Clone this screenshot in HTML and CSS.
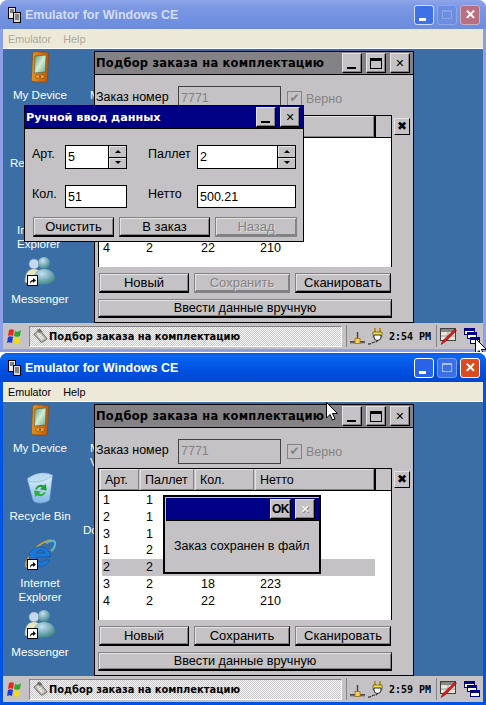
FILE: index.html
```html
<!DOCTYPE html>
<html lang="en">
<head>
    <meta charset="UTF-8">
    <meta name="viewport" content="width=device-width, initial-scale=1.0">
    <title>Emulator for Windows CE</title>
    <link rel="stylesheet" href="styles.css">
</head>
<body>

    <svg class="defs" width="0" height="0">
        <defs>
            <linearGradient id="pda" x1="0" y1="0" x2="1" y2="0">
                <stop offset="0" stop-color="#e8901c"/>
                <stop offset="1" stop-color="#b85c10"/>
            </linearGradient>
            <linearGradient id="screen" x1="0" y1="0" x2="1" y2="1">
                <stop offset="0" stop-color="#5f9c72"/>
                <stop offset="0.5" stop-color="#d2ecd8"/>
                <stop offset="1" stop-color="#6da783"/>
            </linearGradient>
            <linearGradient id="bin" x1="0" y1="0" x2="0" y2="1">
                <stop offset="0" stop-color="#e6f4fc"/>
                <stop offset="1" stop-color="#7fb7e4"/>
            </linearGradient>
            <radialGradient id="ball" cx="0.4" cy="0.3" r="0.8">
                <stop offset="0" stop-color="#c6e2f2"/>
                <stop offset="1" stop-color="#2f7a7c"/>
            </radialGradient>
        </defs>
        <symbol id="i-device" viewBox="0 0 18 32">
            <rect x="1" y="1" width="16" height="30" rx="2" transform="rotate(3 9 16)" fill="url(#pda)" stroke="#8a4a10" stroke-width="0.7"/>
            <path d="M4 5 L15 4 L14.5 21 L3.5 22 Z" fill="url(#screen)" stroke="#3c5a48" stroke-width="0.6"/>
            <path d="M5 24h8v3H5z" fill="#f0a83c" stroke="#8a4a10" stroke-width="0.5"/>
            <circle cx="9" cy="25.5" r="1" fill="#7a4010"/>
        </symbol>
        <symbol id="i-bin" viewBox="0 0 28 33">
            <path d="M1 8 C8 2 20 1 27 3 L24 29 C20 33 10 33 7 30 Z" fill="url(#bin)" stroke="#5c92c4" stroke-width="0.6"/>
            <path d="M2 9 C8 12 18 10 27 4 L24 2 C18 0 8 1 1 7 Z" fill="#bcdcf2" stroke="#7aa8d4" stroke-width="0.5"/>
            <path d="M9 18 a6 6 0 0 1 9 -4 l2 -2 l1 7 l-7 -1 l2 -2 a3.5 3.5 0 0 0 -5 2 Z" fill="#1fa02e"/>
            <path d="M20 21 a6 6 0 0 1 -9 3 l-2 2 l-1 -7 l7 1 l-2 2 a3.5 3.5 0 0 0 5 -1 Z" fill="#26b436"/>
        </symbol>
        <symbol id="i-ie" viewBox="0 0 32 30">
            <path d="M6 25 C1 29 0 26 5 17 C11 6 24 -2 30 1 C32 3 31 7 28 11" fill="none" stroke="#e0a21c" stroke-width="1.6"/>
            <path d="M5 15 a11 11 0 0 1 21 -1 l0 3 H12 a5 5 0 0 0 9 3 h5 a11 11 0 0 1 -21 -5 Z M12 13 h9 a5 5 0 0 0 -9 0 Z" fill="#1b78d8" fill-rule="evenodd" stroke="#0c4ea8" stroke-width="0.6"/>
            <path d="M22 3 C26 1 30 0 31 2 C32 5 29 9 27 11" fill="none" stroke="#4cb8ee" stroke-width="2"/>
        </symbol>
        <symbol id="i-messenger" viewBox="0 0 32 30">
            <circle cx="10" cy="8" r="5" fill="#c6d8ec" stroke="#6a94a8" stroke-width="0.5"/>
            <path d="M1 26 C1 16 5 13 10 13 C15 13 18 17 18 26 C12 29 6 29 1 26 Z" fill="#e8e8c0" stroke="#a8ac78" stroke-width="0.5"/>
            <circle cx="20" cy="7" r="6" fill="url(#ball)"/>
            <path d="M9 26 C9 16 14 13 20 13 C27 13 31 17 31 24 C26 30 14 30 9 26 Z" fill="url(#ball)"/>
        </symbol>
        <symbol id="i-link" viewBox="0 0 11 11">
            <rect x="0.5" y="0.5" width="10" height="10" fill="#fff" stroke="#000"/>
            <path d="M3 9 C3 6 4 5 6 5 V3 L9 5.5 L6 8 V6.5 C5 6.5 4 7 3 9 Z" fill="#000"/>
        </symbol>
        <symbol id="i-flag" viewBox="0 0 16 17">
            <path d="M3 2 C5 1 6 1 8 2 L7 8 C5 7 4 7 2 8 Z" fill="#e8281c"/>
            <path d="M9 3 C11 4 13 4 15 2 L14 8 C12 9 10 9 8 8 Z" fill="#2ca82c"/>
            <path d="M2 9 C4 8 5 8 7 9 L6 15 C4 14 3 14 1 15 Z" fill="#1c3cd8"/>
            <path d="M8 9 C10 10 12 10 14 9 L13 15 C11 16 9 16 7 15 Z" fill="#f4d81c"/>
        </symbol>
        <symbol id="i-task" viewBox="0 0 16 16">
            <path d="M1 6 L7 1 L15 11 L9 15 Z" fill="#c8c4b4" stroke="#505050" stroke-width="0.9"/>
            <path d="M3.5 6 L7 3.2 L12.8 10.8 L9 13 Z" fill="#f0f0e8" stroke="#808080" stroke-width="0.5"/>
            <path d="M4 1.5 L7 0 L10 3 L7 5 Z" fill="#707070"/>
            <path d="M6 7l3 -2M7.5 9l3 -2M9 11l2 -1.5" stroke="#808080" stroke-width="0.6"/>
        </symbol>
        <symbol id="i-net" viewBox="0 0 16 12">
            <path d="M0 10h15" stroke="#000" stroke-width="1.2"/>
            <path d="M0 11h15" stroke="#808080" stroke-width="1"/>
            <path d="M7.5 0v7" stroke="#404040" stroke-width="1.4"/>
            <rect x="5" y="6.5" width="5" height="5" fill="#f4d050" stroke="#a07010" stroke-width="0.8"/>
        </symbol>
        <symbol id="i-plug" viewBox="0 0 17 17">
            <path d="M7 0v4M12 0v4" stroke="#c09010" stroke-width="2"/>
            <path d="M5 4h9v3a4.5 4.5 0 0 1 -9 0Z" fill="#f0e040" stroke="#404000" stroke-width="0.6"/>
            <path d="M6 7h7v2a3.5 3.5 0 0 1 -7 0Z" fill="#fff" stroke="#000" stroke-width="0.8"/>
            <path d="M9.5 12 C9.5 15 7 13 4 15 C3 16 2 16 0 16" fill="none" stroke="#000" stroke-width="1" stroke-dasharray="3 1"/>
        </symbol>
        <symbol id="i-pen" viewBox="0 0 17 17">
            <rect x="0.5" y="0.5" width="15" height="12" fill="#e8e4d8" stroke="#404040"/>
            <path d="M1 1h14v3H1z" fill="#8a8680"/>
            <path d="M1 8h14M8 4v8" stroke="#808080" stroke-width="0.7"/>
            <path d="M15 1 L16.5 2.5 L5 14 L1 16.5 L3 12.5 Z" fill="#e01818" stroke="#700000" stroke-width="0.5"/>
        </symbol>
        <symbol id="i-windows" viewBox="0 0 16 16">
            <rect x="0.5" y="0.5" width="10" height="6" fill="#fff" stroke="#000080"/>
            <rect x="1" y="1" width="9" height="2" fill="#000080"/>
            <rect x="3.5" y="4.5" width="9" height="6" fill="#fff" stroke="#000080"/>
            <rect x="4" y="5" width="8" height="2" fill="#000080"/>
            <rect x="6.5" y="9.5" width="9" height="6" fill="#fff" stroke="#000080"/>
            <rect x="7" y="10" width="8" height="2" fill="#000080"/>
        </symbol>
        <symbol id="i-emu" viewBox="0 0 13 16">
            <rect x="0.5" y="0.5" width="7" height="11" fill="#e8e8e8" stroke="#000"/>
            <rect x="2" y="2" width="4" height="4" fill="#808080"/>
            <rect x="5.5" y="5.5" width="7" height="10" fill="#d8d8d8" stroke="#000"/>
            <path d="M7 8h4M7 10h4M7 12h4" stroke="#000" stroke-width="0.8"/>
        </symbol>
        <symbol id="i-cursor" viewBox="0 0 12 19">
            <path d="M0.5 0.5 V16 L4 12.5 L6.5 18 L9 17 L6.5 11.5 H11.5 Z" fill="#fff" stroke="#000" stroke-width="1"/>
        </symbol>
    </svg>

    <!-- first capture: emulator not focused, manual entry dialog open -->
    <div class="emu emu-inactive">
        <div class="emu-title">
            <svg class="emu-logo"><use href="#i-emu"/></svg>
            <span class="emu-name">Emulator for Windows CE</span>
            <div class="xp-buttons">
                <span class="xp-btn xp-min"><i></i></span>
                <span class="xp-btn xp-max off"><i></i></span>
                <span class="xp-btn xp-close">&#10005;</span>
            </div>
        </div>
        <div class="emu-menu"><span>Emulator</span><span>Help</span></div>

        <div class="desktop">
            <div class="desk-item at-device"><svg class="ic-device"><use href="#i-device"/></svg><span>My Device</span></div>
            <div class="desk-far at-re">Re</div>
            <div class="desk-far at-in">In</div>
            <div class="desk-far at-expl">Explorer</div>
            <div class="desk-item at-msn"><svg class="ic-big"><use href="#i-messenger"/></svg><svg class="ic-link"><use href="#i-link"/></svg><span>Messenger</span></div>
            <div class="desk-far at-word">M</div>

            <div class="app">
                <div class="app-title">
                    <span>Подбор заказа на комплектацию</span>
                    <div class="ce-buttons">
                        <span class="ce-btn"><i class="g-min"></i></span>
                        <span class="ce-btn"><i class="g-max"></i></span>
                        <span class="ce-btn g-x">&#10005;</span>
                    </div>
                </div>
                <div class="order-row">
                    <label class="order-label">Заказ номер</label>
                    <div class="field field-off order-no">7771</div>
                    <span class="check">&#10004;</span>
                    <span class="muted">Верно</span>
                </div>
                <div class="grid-row">
                    <div class="grid">
                        <div class="grid-head">
                            <span class="th w-art"></span>
                            <span class="th w-pal"></span>
                            <span class="th w-kol"></span>
                            <span class="th w-net"></span>
                            <span class="th-rest"></span>
                        </div>
                        <div class="grid-body">
                            <div class="tr"></div>
                            <div class="tr"></div>
                            <div class="tr"></div>
                            <div class="tr"></div>
                            <div class="tr"></div>
                            <div class="tr"></div>
                            <div class="tr"><span>4</span><span>2</span><span>22</span><span>210</span></div>
                        </div>
                    </div>
                    <span class="grid-x">&#10006;</span>
                </div>
                <div class="actions">
                    <button class="btn w-new">Новый</button>
                    <button class="btn w-save" disabled>Сохранить</button>
                    <button class="btn w-scan">Сканировать</button>
                </div>
                <button class="btn btn-manual">Ввести данные вручную</button>
            </div>

            <div class="dialog">
                <div class="dialog-title">
                    <span>Ручной ввод данных</span>
                    <div class="ce-buttons">
                        <span class="ce-btn"><i class="g-min"></i></span>
                        <span class="ce-btn g-x">&#10005;</span>
                    </div>
                </div>
                <div class="dialog-form">
                    <label>Арт.</label>
                    <div class="field field-spin"><span>5</span><div class="spin"><b class="up"></b><b class="down"></b></div></div>
                    <span></span>
                    <label>Паллет</label>
                    <div class="field field-spin"><span>2</span><div class="spin"><b class="up"></b><b class="down"></b></div></div>
                    <label>Кол.</label>
                    <div class="field">51</div>
                    <span></span>
                    <label>Нетто</label>
                    <div class="field">500.21</div>
                </div>
                <div class="dialog-actions">
                    <button class="btn w-clear">Очистить</button>
                    <button class="btn w-add">В заказ</button>
                    <button class="btn w-back" disabled>Назад</button>
                </div>
            </div>
        </div>

        <div class="taskbar">
            <svg class="start"><use href="#i-flag"/></svg>
            <div class="task-btn"><svg class="task-ic"><use href="#i-task"/></svg><span>Подбор заказа на комплектацию</span></div>
            <div class="tray">
                <svg class="tray-net"><use href="#i-net"/></svg>
                <svg class="tray-plug"><use href="#i-plug"/></svg>
                <span class="clock">2:54 PM</span>
            </div>
            <svg class="tray-pen"><use href="#i-pen"/></svg>
            <svg class="tray-win"><use href="#i-windows"/></svg>
        </div>
        <svg class="cursor cursor-top"><use href="#i-cursor"/></svg>
    </div>

    <!-- second capture: emulator focused, order saved message -->
    <div class="emu">
        <div class="emu-title">
            <svg class="emu-logo"><use href="#i-emu"/></svg>
            <span class="emu-name">Emulator for Windows CE</span>
            <div class="xp-buttons">
                <span class="xp-btn xp-min"><i></i></span>
                <span class="xp-btn xp-max off"><i></i></span>
                <span class="xp-btn xp-close">&#10005;</span>
            </div>
        </div>
        <div class="emu-menu"><span>Emulator</span><span>Help</span></div>

        <div class="desktop">
            <div class="desk-item at-device"><svg class="ic-device"><use href="#i-device"/></svg><span>My Device</span></div>
            <div class="desk-item at-recycle"><svg class="ic-bin"><use href="#i-bin"/></svg><span>Recycle Bin</span></div>
            <div class="desk-item at-ie"><svg class="ic-big"><use href="#i-ie"/></svg><svg class="ic-link"><use href="#i-link"/></svg><span>Internet<br>Explorer</span></div>
            <div class="desk-item at-msn"><svg class="ic-big"><use href="#i-messenger"/></svg><svg class="ic-link"><use href="#i-link"/></svg><span>Messenger</span></div>
            <div class="desk-far at-word">M<br>V</div>
            <div class="desk-far at-docs">Do</div>

            <div class="app">
                <div class="app-title">
                    <span>Подбор заказа на комплектацию</span>
                    <div class="ce-buttons">
                        <span class="ce-btn"><i class="g-min"></i></span>
                        <span class="ce-btn"><i class="g-max"></i></span>
                        <span class="ce-btn g-x">&#10005;</span>
                    </div>
                </div>
                <div class="order-row">
                    <label class="order-label">Заказ номер</label>
                    <div class="field field-off order-no">7771</div>
                    <span class="check">&#10004;</span>
                    <span class="muted">Верно</span>
                </div>
                <div class="grid-row">
                    <div class="grid">
                        <div class="grid-head">
                            <span class="th w-art">Арт.</span>
                            <span class="th w-pal">Паллет</span>
                            <span class="th w-kol">Кол.</span>
                            <span class="th w-net">Нетто</span>
                            <span class="th-rest"></span>
                        </div>
                        <div class="grid-body">
                            <div class="tr"><span>1</span><span>1</span></div>
                            <div class="tr"><span>2</span><span>1</span></div>
                            <div class="tr"><span>3</span><span>1</span></div>
                            <div class="tr"><span>1</span><span>2</span></div>
                            <div class="tr tr-sel"><span>2</span><span>2</span></div>
                            <div class="tr"><span>3</span><span>2</span><span>18</span><span>223</span></div>
                            <div class="tr"><span>4</span><span>2</span><span>22</span><span>210</span></div>
                        </div>
                    </div>
                    <span class="grid-x">&#10006;</span>
                </div>
                <div class="actions">
                    <button class="btn w-new">Новый</button>
                    <button class="btn w-save">Сохранить</button>
                    <button class="btn w-scan">Сканировать</button>
                </div>
                <button class="btn btn-manual">Ввести данные вручную</button>
            </div>

            <div class="msgbox">
                <div class="msg-title">
                    <span class="ce-btn msg-ok">OK</span>
                    <span class="ce-btn g-x g-off">&#10005;</span>
                </div>
                <div class="msg-text">Заказ сохранен в файл</div>
            </div>
        </div>

        <div class="taskbar">
            <svg class="start"><use href="#i-flag"/></svg>
            <div class="task-btn"><svg class="task-ic"><use href="#i-task"/></svg><span>Подбор заказа на комплектацию</span></div>
            <div class="tray">
                <svg class="tray-net"><use href="#i-net"/></svg>
                <svg class="tray-plug"><use href="#i-plug"/></svg>
                <span class="clock">2:59 PM</span>
            </div>
            <svg class="tray-pen"><use href="#i-pen"/></svg>
            <svg class="tray-win"><use href="#i-windows"/></svg>
        </div>
        <svg class="cursor cursor-app"><use href="#i-cursor"/></svg>
    </div>

</body>
</html>
```

FILE: styles.css
```css
body {
    margin: 0;
    width: 486px;
    height: 705px;
    overflow: hidden;
    background: #fff;
    font-family: "Liberation Sans", Arial, sans-serif;
    font-size: 12.5px;
    color: #000;
}
.defs { position: absolute; }
svg { display: block; }
i { display: block; }

/* emulator window */
.emu {
    position: relative;
    box-sizing: border-box;
    height: 352px;
    margin-bottom: 1px;
    display: flex;
    flex-direction: column;
    overflow: hidden;
    border-radius: 8px 8px 0 0;
    background: #0054e3;
    padding: 0 3px 3px;
}
.emu-inactive { background: #8d9fe6; }
.emu-title {
    flex: none;
    height: 29px;
    margin: 0 -3px;
    padding: 0 6px 0 8px;
    display: flex;
    align-items: center;
    background: linear-gradient(#0a5ae6, #0a66f0 10%, #0050e0 60%, #0047d0);
    color: #fff;
}
.emu-inactive .emu-title { background: linear-gradient(#8ea4e8, #7b98e4 25%, #7090e0 70%, #6f8cdc); color: #d4dcf6; }
.emu-logo { width: 13px; height: 16px; margin-right: 4px; }
.emu-name { font-weight: bold; font-size: 12.5px; }
.xp-buttons { margin-left: auto; display: flex; gap: 3px; }
.xp-btn {
    box-sizing: border-box;
    width: 20px;
    height: 20px;
    border: 1px solid #fff;
    border-radius: 3px;
    background: #2a62e8;
    color: #fff;
    font-size: 13px;
    font-weight: bold;
    line-height: 18px;
    text-align: center;
    position: relative;
}
.xp-min i { width: 7px; height: 3px; background: #fff; position: absolute; left: 4px; bottom: 3px; }
.xp-max i { width: 10px; height: 9px; margin: 4px; border: 1px solid #a8c0f4; border-top-width: 2px; box-sizing: border-box; }
.xp-max { background: #3b6fe6; border-color: #7c9cec; }
.xp-close { background: #dc4a20; }
.emu-inactive .xp-min { background: #3f70e6; border-color: #cfdcf8; }
.emu-inactive .xp-max { background: #6c8ee0; border-color: #8ca6e6; }
.emu-inactive .xp-max i { border-color: #8ca4e4; }
.emu-inactive .xp-close { background: #b87080; border-color: #c8b0c4; }

.emu-menu {
    flex: none;
    height: 19px;
    border-bottom: 1px solid #fff;
    background: #ece9d8;
    display: flex;
    align-items: center;
    gap: 12px;
    padding-left: 5px;
    font-size: 10.8px;
}
.emu-inactive .emu-menu { color: #aca899; }

/* desktop */
.desktop {
    flex: none;
    position: relative;
    height: 274px;
    overflow: hidden;
    background: #3a6ea5;
    color: #fff;
}
.desk-item {
    position: absolute;
    left: 0;
    width: 74px;
    display: flex;
    flex-direction: column;
    align-items: center;
    text-align: center;
    line-height: 14px;
    font-size: 11.6px;
}
.desk-item span { margin-top: 5px; }
.desk-far { position: absolute; line-height: 14px; font-size: 11.6px; overflow: hidden; }
.at-device { top: 2px; }
.at-recycle { top: 70px; }
.at-ie { top: 137px; }
.at-msn { top: 206px; }
.at-word { left: 87px; top: 39px; width: 4px; }
.at-docs { left: 80px; top: 121px; width: 11px; }
.at-re { left: 7px; top: 107px; }
.at-in { left: 14px; top: 174px; }
.at-expl { left: 14px; top: 188px; }
.ic-device { width: 18px; height: 32px; }
.ic-bin { width: 28px; height: 32px; }
.ic-big { width: 32px; height: 32px; }
.ic-link { width: 11px; height: 11px; position: absolute; left: 24px; top: 20px; }

/* wince controls */
.app {
    position: absolute;
    left: 91px;
    top: 2px;
    box-sizing: border-box;
    width: 320px;
    height: 272px;
    border: 1px solid #000;
    background: #c4c2c4;
    color: #000;
}
.app-title {
    height: 22px;
    border-bottom: 1px solid #000;
    background: #848284;
    display: flex;
    align-items: center;
    padding-left: 1px;
    font-family: "DejaVu Sans", sans-serif;
    font-weight: bold;
    font-size: 11.5px;
    letter-spacing: 0.2px;
}
.ce-buttons { margin-left: auto; margin-right: 3px; display: flex; gap: 4px; }
.ce-btn {
    box-sizing: border-box;
    width: 20px;
    height: 20px;
    background: #c4c2c4;
    border: 1px solid;
    border-color: #e4e2e4 #000 #000 #e4e2e4;
    box-shadow: inset -1px -1px 0 #848284;
    display: flex;
    align-items: center;
    justify-content: center;
    position: relative;
    color: #000;
}
.g-min { width: 9px; height: 2px; background: #000; position: absolute; left: 4px; bottom: 3px; }
.g-max { width: 12px; height: 11px; box-sizing: border-box; border: 1px solid #000; border-top-width: 3px; }
.g-x { font-size: 11px; font-family: "DejaVu Sans", sans-serif; font-weight: normal; }
.g-off { color: #fff; text-shadow: 1px 1px 0 #848284; }

.order-row {
    margin-top: 11px;
    height: 25px;
    display: flex;
    align-items: center;
    padding-left: 1px;
}
.order-label { width: 82px; position: relative; top: -2px; }
.field {
    box-sizing: border-box;
    background: #fff;
    border: 1px solid #000;
    height: 24px;
    line-height: 22px;
    padding: 0 2px;
    white-space: nowrap;
}
.order-no { width: 103px; height: 25px; margin-right: 6px; }
.field-off { background: #c4c2c4; color: #848284; border-color: #424142; }
.check {
    box-sizing: border-box;
    width: 15px;
    height: 15px;
    border: 1px solid #848284;
    margin-right: 4px;
    color: #848284;
    font-size: 12px;
    line-height: 13px;
    text-align: center;
    font-family: "DejaVu Sans", sans-serif;
}
.muted { color: #848284; }

.grid-row { margin-top: 4px; margin-left: 3px; display: flex; }
.grid { width: 294px; height: 152px; box-sizing: border-box; border: 1px solid #000; }
.grid-head { height: 21px; border-bottom: 1px solid #000; display: flex; gap: 1px; padding-left: 1px; }
.th {
    box-sizing: border-box;
    height: 21px;
    line-height: 20px;
    padding-left: 4px;
    border: 1px solid;
    border-color: #e4e2e4 #848284 #848284 #e4e2e4;
}
.w-art { width: 39px; }
.w-pal { width: 54px; }
.w-kol { width: 59px; }
.w-net { width: 119px; }
.th-rest { flex: 1; border-left: 2px solid #000; margin-left: -1px; }
.grid-body { height: 129px; background: #fff; box-sizing: border-box; padding-top: 1px; }
.tr {
    height: 16.8px;
    line-height: 17px;
    margin-left: 3px;
    width: 273px;
    display: grid;
    grid-template-columns: 43px 55px 59px 1fr;
    padding-left: 1px;
    box-sizing: border-box;
}
.tr-sel { background: #c4c2c4; }
.grid-x {
    box-sizing: border-box;
    width: 16px;
    height: 17px;
    margin: 3px 0 0 2px;
    background: #c4c2c4;
    border: 1px solid;
    border-color: #e4e2e4 #000 #000 #e4e2e4;
    font-size: 12px;
    line-height: 15px;
    text-align: center;
    font-family: "DejaVu Sans", sans-serif;
}

.btn {
    box-sizing: border-box;
    height: 20px;
    padding: 0;
    background: #c4c2c4;
    border: 1px solid;
    border-color: #848284 #000 #000 #848284;
    border-bottom-width: 2px;
    box-shadow: inset 1px 1px 0 #e4e2e4, inset -1px -1px 0 #848284;
    font-family: inherit;
    font-size: 13px;
    color: #000;
    line-height: 16px;
}
.btn:disabled { color: #848284; text-shadow: 1px 1px 0 #dcdadc; border-color: #848284; }
.actions { margin: 6px 0 0 4px; display: flex; gap: 5px; }
.w-new { width: 90px; }
.w-save { width: 96px; }
.w-scan { width: 96px; }
.btn-manual { display: block; width: 294px; height: 19px; margin: 6px 0 0 3px; font-size: 12.7px; }

/* manual entry dialog */
.dialog {
    position: absolute;
    left: 21px;
    top: 56px;
    box-sizing: border-box;
    width: 280px;
    height: 137px;
    border: 1px solid #000;
    background: #c4c2c4;
    color: #000;
}
.dialog-title {
    height: 22px;
    border-bottom: 1px solid #000;
    background: #000084;
    color: #fff;
    display: flex;
    align-items: center;
    padding-left: 1px;
    font-family: "DejaVu Sans", sans-serif;
    font-weight: bold;
    font-size: 11.2px;
}
.dialog-form {
    padding: 16px 0 0 7px;
    display: grid;
    grid-template-columns: 33px 62px 21px 49px 99px;
    grid-template-rows: 24px 23px;
    row-gap: 16px;
    align-items: start;
}
.dialog-form label { line-height: 18px; }
.dialog-form .field { height: 100%; }
.field-spin { display: flex; padding-right: 0; }
.field-spin span { flex: 1; }
.spin { width: 17px; display: flex; flex-direction: column; gap: 1px; background: #000; margin: -1px -1px -1px 0; border: 1px solid #000; }
.spin b { flex: 1; background: #c4c2c4; display: flex; align-items: center; justify-content: center; box-shadow: inset 1px 1px 0 #e4e2e4; }
.spin b::after { content: ""; border-left: 3px solid transparent; border-right: 3px solid transparent; }
.spin .up::after { border-bottom: 3px solid #000; }
.spin .down::after { border-top: 3px solid #000; }
.dialog-actions { margin: 9px 0 0 8px; display: flex; gap: 5px; }
.w-clear { width: 81px; }
.w-add { width: 91px; }
.w-back { width: 82px; }

/* saved message */
.msgbox {
    position: absolute;
    left: 160px;
    top: 93px;
    box-sizing: border-box;
    width: 158px;
    height: 79px;
    border: 2px solid #000;
    background: #c4c2c4;
    color: #000;
}
.msg-title {
    margin: 1px 0 0 1px;
    height: 23px;
    box-sizing: border-box;
    background: #000084;
    display: flex;
    align-items: flex-start;
    justify-content: flex-end;
    gap: 4px;
    padding: 1px 4px 0 0;
    border-bottom: 1px solid #000;
}
.msg-ok { font-weight: bold; font-size: 12px; letter-spacing: -0.5px; width: 21px; }
.msg-text { padding: 17px 0 0 9px; font-size: 12.5px; line-height: 16px; }

/* taskbar */
.taskbar {
    flex: none;
    height: 26px;
    background: #c4c2c4;
    display: flex;
    align-items: center;
    color: #000;
}
.start { width: 16px; height: 17px; margin: 0 3px; flex: none; }
.task-btn {
    box-sizing: border-box;
    flex: none;
    width: 313px;
    height: 21px;
    margin-left: 4px;
    border: 1px solid;
    border-color: #848284 #fff #fff #848284;
    display: flex;
    align-items: center;
    padding-left: 3px;
    background: repeating-conic-gradient(#fff 0 25%, #c4c2c4 0 50%) 0 0 / 2px 2px;
    font-family: "DejaVu Sans", sans-serif;
    font-weight: bold;
    font-size: 9.9px;
    white-space: nowrap;
}
.task-ic { width: 15px; height: 16px; margin-right: 1px; }
.tray {
    height: 22px;
    margin-left: 4px;
    width: 91px;
    flex: none;
    box-sizing: border-box;
    border-left: 1px solid #848284;
    border-right: 1px solid #848284;
    display: flex;
    align-items: center;
    padding-left: 3px;
}
.tray-net { width: 16px; height: 12px; margin-top: 4px; margin-right: 2px; flex: none; }
.tray-plug { width: 17px; height: 17px; margin-right: 4px; flex: none; }
.clock { font-family: "DejaVu Sans Mono", monospace; font-weight: bold; font-size: 10px; white-space: nowrap; }
.tray-pen { width: 17px; height: 17px; margin: 0 4px 0 3px; flex: none; }
.tray-win { width: 16px; height: 16px; margin-left: 3px; flex: none; }

.cursor { position: absolute; width: 12px; height: 19px; }
.cursor-top { left: 475px; top: 338px; }
.cursor-app { left: 326px; top: 49px; }
```
